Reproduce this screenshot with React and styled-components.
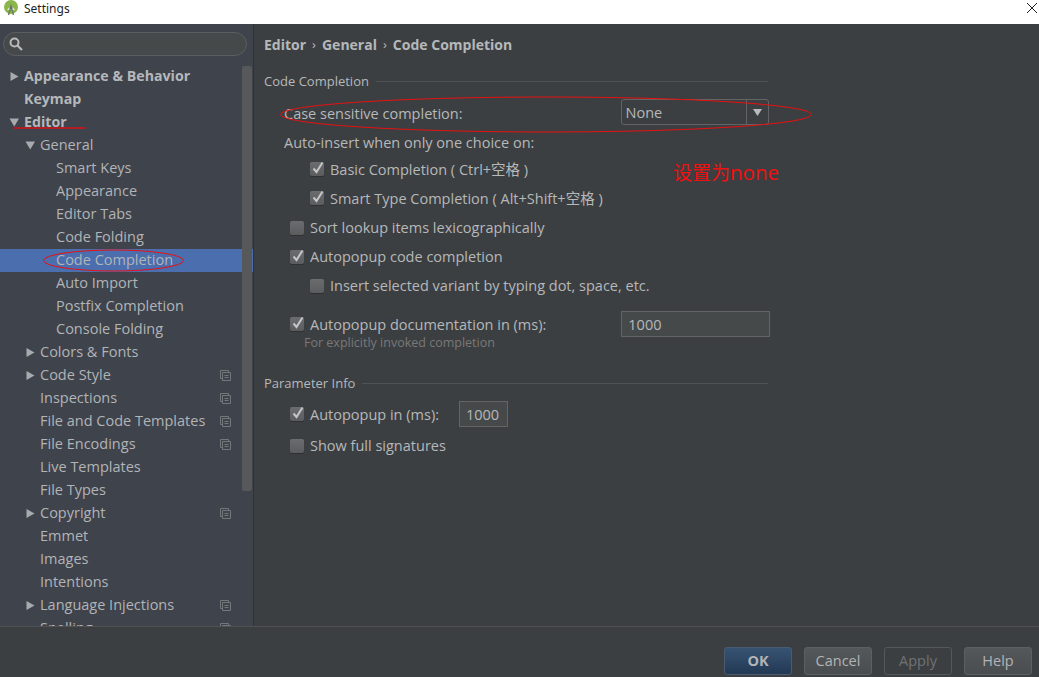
import React from "react";
import styled, { createGlobalStyle } from "styled-components";

const Global = createGlobalStyle`
  html, body { margin: 0; padding: 0; background: #3c3f41; }
  * { box-sizing: border-box; }
  #root { width: 1039px; height: 677px; overflow: hidden; }
`;
const FONT = `"Open Sans", "Noto Sans", "Noto Sans CJK SC", sans-serif`;

const Page = styled.div`
  position: relative; width: 1039px; height: 677px; display: flex; flex-direction: column;
  background: #3c3f41; color: #b6b8ba; font-family: ${FONT}; font-size: 14.5px; overflow: hidden;
`;
const TitleBar = styled.div`
  height: 24px; flex: none; background: #fff; color: #222; display: flex; align-items: center;
  padding: 0 0 8px 4px; font-size: 12px; font-family: "Noto Sans", sans-serif;
`;
const TitleText = styled.span` margin-left: 6px; flex: 1; `;
const Body = styled.div` flex: 1; display: flex; min-height: 0; `;
const Sidebar = styled.div`
  position: relative; width: 254px; flex: none; background: #3f434c; border-right: 1px solid #323232;
  overflow: hidden; padding: 8px 0 0 0; display: flex; flex-direction: column;
`;
const Search = styled.div`
  height: 24px; width: 244px; margin-left: 3px; border-radius: 12px; border: 1px solid #5b5e60;
  background: #45494a; display: flex; align-items: center; padding-left: 4px; flex: none;
`;
const Tree = styled.div` margin-top: 9px; flex: none; `;
const Row = styled.div`
  height: 23px; display: flex; align-items: center; position: relative; white-space: nowrap;
  padding-left: ${p => p.$level * 16 + 24}px; padding-bottom: 2px;
  font-weight: ${p => (p.$bold ? 700 : 400)};
  font-size: ${p => (p.$bold ? "14.2px" : "14.5px")};
  background: ${p => (p.$selected ? "#4b6eaf" : "transparent")};
  color: ${p => (p.$bold ? "#b5b8ba" : "#b2b4b6")};
`;
const Arrow = styled.svg`
  position: absolute; left: ${p => p.$level * 16 + 9}px; top: 6px; width: 11px; height: 11px; fill: #a8abad;
`;
const Copy = styled.svg`
  position: absolute; left: 220px; top: 6px; width: 11px; height: 11px; fill: none; stroke: #74777a; stroke-width: 1;
`;
const Scrollbar = styled.div`
  position: absolute; left: 242px; top: 42px; width: 10px; height: 425px; background: #565859; border-radius: 2px;
`;
const Main = styled.div` flex: 1; padding: 7px 0 0 10px; min-width: 0; `;
const Crumbs = styled.div`
  height: 26px; display: flex; align-items: center; gap: 6px; font-weight: 700; color: #b5b8ba; font-size: 14px;
`;
const Sep = styled.span` font-weight: 400; font-size: 13px; `;
const SectionHead = styled.div`
  width: 504px; display: flex; align-items: center; gap: 7px; height: 20px; font-size: 13px;
  margin-top: ${p => p.$top}px;
  &::after { content: ""; flex: 1; height: 1px; background: #505254; }
`;
const FormRow = styled.div`
  display: flex; align-items: center; height: ${p => p.$h || 29}px; padding-left: ${p => p.$indent}px;
  margin-top: ${p => p.$top || 0}px;
`;
const Label = styled.span` white-space: nowrap; `;
const Spacer = styled.div` width: ${p => p.$w}px; flex: none; `;
const Box = styled.span`
  width: 14px; height: 14px; flex: none; margin-right: 6px; border-radius: 2px; position: relative;
  background: linear-gradient(#6a6c6e, #5a5c5e); box-shadow: 0 1px 0 #2e3031; display: inline-block;
  svg { position: absolute; left: 1px; top: -2px; }
`;
const Select = styled.div`
  width: 148px; height: 26px; margin-top: -2px; border: 1px solid #646464; border-radius: 3px; display: flex; align-items: center;
  padding-left: 4px; background: #3c3f41;
`;
const SelectValue = styled.span` flex: 1; `;
const SelectButton = styled.span`
  width: 22px; height: 24px; border-left: 1px solid #646464; display: flex; align-items: center; justify-content: center;
`;
const Field = styled.div`
  width: ${p => p.$w}px; height: 26px; border: 1px solid #646464; background: #45494a; display: flex;
  align-items: center; padding-left: 6px; flex: none;
`;
const Hint = styled.div`
  height: 16px; margin-top: -3px; padding-left: 40px; font-size: 12.5px; color: #787878;
`;
const Footer = styled.div`
  height: 51px; flex: none; border-top: 1px solid #515151; display: flex; justify-content: flex-end;
  gap: 12px; padding: 20px 7px 0 0; background: #3c3f41;
`;
const Button = styled.div`
  width: 68px; height: 28px; border-radius: 3px; display: flex; align-items: center; justify-content: center;
  padding-bottom: 2px;
  border: 1px solid ${p => (p.$primary ? "#4a5c72" : p.$disabled ? "#555759" : "#5e6060")};
  background: ${p => (p.$primary ? "linear-gradient(#375373, #233954)" : p.$disabled ? "transparent" : "linear-gradient(#54585a, #4a4d4f)")};
  color: ${p => (p.$disabled ? "#707274" : "#b2b4b6")};
  font-weight: ${p => (p.$primary ? 700 : 400)};
`;
const Note = styled.div`
  position: absolute; left: 673px; top: 159px; color: #f01010; font-size: 19px; line-height: 26px; white-space: nowrap;
  font-family: "Open Sans", "Noto Sans CJK SC", sans-serif;
`;
const NoteLatin = styled.span` font-size: 20.5px; `;
const Ink = styled.svg`
  position: absolute; left: 0; top: 0; width: 1039px; height: 677px; pointer-events: none; fill: none;
`;

const tree = [
  ["Appearance & Behavior", 0, "r", 1], ["Keymap", 0, "", 1], ["Editor", 0, "d", 1],
  ["General", 1, "d"], ["Smart Keys", 2], ["Appearance", 2], ["Editor Tabs", 2], ["Code Folding", 2],
  ["Code Completion", 2, "", 0, 0, 1], ["Auto Import", 2], ["Postfix Completion", 2], ["Console Folding", 2],
  ["Colors & Fonts", 1, "r"], ["Code Style", 1, "r", 0, 1], ["Inspections", 1, "", 0, 1],
  ["File and Code Templates", 1, "", 0, 1], ["File Encodings", 1, "", 0, 1], ["Live Templates", 1], ["File Types", 1],
  ["Copyright", 1, "r", 0, 1], ["Emmet", 1], ["Images", 1], ["Intentions", 1],
  ["Language Injections", 1, "r", 0, 1], ["Spelling", 1, "", 0, 1],
];

const Check = ({ on }) => (
  <Box>
    {on && (
      <svg width="14" height="15" viewBox="0 0 14 15">
        <path d="M2.5 8.5 L5.5 12 L11.5 2.5" fill="none" stroke="#c4c6c8" strokeWidth="2" />
      </svg>
    )}
  </Box>
);

const CheckRow = ({ indent, on, children, ...rest }) => (
  <FormRow $indent={indent} {...rest}>
    <Check on={on} />
    <Label>{children}</Label>
  </FormRow>
);

export default function App() {
  return (
    <Page>
      <Global />
      <TitleBar>
        <svg width="14" height="16" viewBox="0 0 14 16">
          <circle cx="7" cy="7" r="7" fill="#8ab64a" />
          <path d="M3 10 Q7 3 11 10 Z" fill="#e8f0e0" />
          <path d="M4.5 15 L7 6 L9.5 15" stroke="#6d7a6a" strokeWidth="1.4" fill="none" />
          <circle cx="7" cy="8" r="1.4" fill="#5f6f58" />
        </svg>
        <TitleText>Settings</TitleText>
        <svg width="14" height="14" viewBox="0 0 14 14">
          <path d="M2 2 L12 12 M12 2 L2 12" stroke="#222" strokeWidth="1" />
        </svg>
      </TitleBar>
      <Body>
        <Sidebar>
          <Search>
            <svg width="16" height="16" viewBox="0 0 16 16">
              <circle cx="6.5" cy="6.5" r="4" fill="none" stroke="#b8babc" strokeWidth="2" />
              <path d="M9.5 9.5 L14 14" stroke="#b8babc" strokeWidth="2.2" />
            </svg>
          </Search>
          <Tree>
            {tree.map(([name, level, arrow, bold, copy, sel]) => (
              <Row key={name} $level={level} $bold={bold} $selected={sel}>
                {arrow === "r" && (
                  <Arrow $level={level} viewBox="0 0 11 11"><path d="M1.5 1 L9.5 5.5 L1.5 10 Z" /></Arrow>
                )}
                {arrow === "d" && (
                  <Arrow $level={level} viewBox="0 0 11 11"><path d="M0.5 1.5 L10 1.5 L5.25 9.5 Z" /></Arrow>
                )}
                {name}
                {copy ? (
                  <Copy viewBox="0 0 11 11">
                    <path d="M2.5 8.5 H0.5 V0.5 H8.5 V2.5" />
                    <path d="M2.5 2.5 H10.5 V10.5 H2.5 Z M4.5 5.5 H8.5 M4.5 7.5 H8.5" />
                  </Copy>
                ) : null}
              </Row>
            ))}
          </Tree>
          <Scrollbar />
        </Sidebar>
        <Main>
          <Crumbs>
            <span>Editor</span><Sep>›</Sep><span>General</span><Sep>›</Sep><span>Code Completion</span>
          </Crumbs>
          <SectionHead $top={14}>Code Completion</SectionHead>
          <FormRow $indent={20} $h={26} $top={9}>
            <Label>Case sensitive completion:</Label>
            <Spacer $w={158} />
            <Select>
              <SelectValue>None</SelectValue>
              <SelectButton>
                <svg width="9" height="7" viewBox="0 0 9 7"><path d="M0 0 H9 L4.5 7 Z" fill="#b8babc" /></svg>
              </SelectButton>
            </Select>
          </FormRow>
          <FormRow $indent={20} $h={29} $top={2}><Label>Auto-insert when only one choice on:</Label></FormRow>
          <CheckRow indent={46} on $top={-3}>Basic Completion ( Ctrl+空格 )</CheckRow>
          <CheckRow indent={46} on>Smart Type Completion ( Alt+Shift+空格 )</CheckRow>
          <CheckRow indent={26} $top={1}>Sort lookup items lexicographically</CheckRow>
          <CheckRow indent={26} on>Autopopup code completion</CheckRow>
          <CheckRow indent={46}>Insert selected variant by typing dot, space, etc.</CheckRow>
          <FormRow $indent={26} $h={26} $top={11}>
            <Check on />
            <Label>Autopopup documentation in (ms):</Label>
            <Spacer $w={75} />
            <Field $w={149}>1000</Field>
          </FormRow>
          <Hint>For explicitly invoked completion</Hint>
          <SectionHead $top={23}>Parameter Info</SectionHead>
          <FormRow $indent={26} $h={26} $top={8}>
            <Check on />
            <Label>Autopopup in (ms):</Label>
            <Spacer $w={20} />
            <Field $w={49}>1000</Field>
          </FormRow>
          <CheckRow indent={26} $top={4}>Show full signatures</CheckRow>
        </Main>
      </Body>
      <Footer>
        <Button $primary>OK</Button>
        <Button>Cancel</Button>
        <Button $disabled>Apply</Button>
        <Button>Help</Button>
      </Footer>
      <Note>设置为<NoteLatin>none</NoteLatin></Note>
      <Ink viewBox="0 0 1039 677">
        <ellipse cx="546" cy="114.5" rx="265.5" ry="17.5" stroke="#e81010" strokeWidth="1" />
        <ellipse cx="113.5" cy="260.5" rx="70" ry="10.5" stroke="#e81010" strokeWidth="1" />
        <path d="M14 128 H85" stroke="#d81018" strokeWidth="1.5" />
      </Ink>
    </Page>
  );
}
